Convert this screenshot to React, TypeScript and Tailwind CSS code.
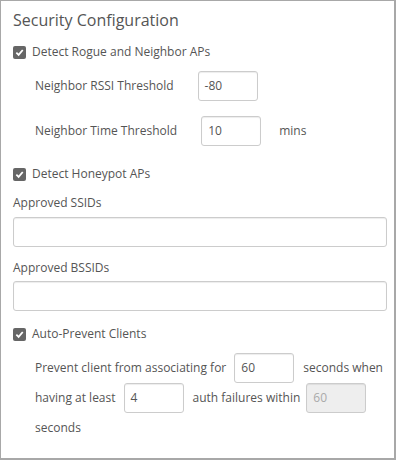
const font = { fontFamily: '"Open Sans", "Liberation Sans", sans-serif' };

function Check({ label }: { label: string }) {
  return (
    <div className="flex h-[20px] items-center gap-[6px]">
      <span className="flex h-[13px] w-[13px] items-center justify-center rounded-[2px] bg-[#666]">
        <svg width="9" height="9" viewBox="0 0 10 10">
          <path d="M1.5 5.2 L4 7.6 L8.6 2.2" fill="none" stroke="#fff" strokeWidth="2" />
        </svg>
      </span>
      <span>{label}</span>
    </div>
  );
}

function Box({ value, w = "w-[60px]", disabled = false }: { value: string; w?: string; disabled?: boolean }) {
  return (
    <div
      className={`flex h-[30px] shrink-0 items-center rounded-[3px] border border-[#ccc] px-[6px] shadow-[inset_0_1px_1px_rgba(0,0,0,0.075)] ${w} ${
        disabled ? "bg-[#eee] text-[#aaa]" : "bg-white text-[#555]"
      }`}
    >
      {value}
    </div>
  );
}

export default function App() {
  return (
    <div
      style={font}
      className="h-[460px] w-[396px] whitespace-nowrap border border-r-2 border-b-2 border-[#a8a8a8] bg-white pl-[12px] pr-[7px] pt-[7px] text-[12px] text-[#555]"
    >
      <h1 className="h-[24px] text-[16px] leading-[24px] text-[#555]">Security Configuration</h1>

      <div className="mt-[10px]">
        <Check label="Detect Rogue and Neighbor APs" />
      </div>

      <div className="mt-[9px] flex items-center gap-[24px] pl-[22px]">
        <span>Neighbor RSSI Threshold</span>
        <Box value="-80" />
      </div>
      <div className="mt-[15px] flex items-center pl-[22px]">
        <span>Neighbor Time Threshold</span>
        <div className="ml-[24px]">
          <Box value="10" />
        </div>
        <span className="ml-[18px]">mins</span>
      </div>

      <div className="mt-[18px]">
        <Check label="Detect Honeypot APs" />
      </div>

      <div className="mt-[9px] flex h-[20px] items-center">Approved SSIDs</div>
      <div className="mt-[4px]">
        <Box value="" w="w-full" />
      </div>

      <div className="mt-[11px] flex h-[20px] items-center">Approved BSSIDs</div>
      <div className="mt-[3px]">
        <Box value="" w="w-full" />
      </div>

      <div className="mt-[13px]">
        <Check label="Auto-Prevent Clients" />
      </div>

      <div className="mt-[9px] pl-[22px]">
        <div className="flex h-[30px] items-center">
          <span>Prevent client from associating for</span>
          <div className="ml-[8px] mr-[9px]">
            <Box value="60" />
          </div>
          <span>seconds when</span>
        </div>
        <div className="flex h-[30px] items-center">
          <span>having at least</span>
          <div className="ml-[8px] mr-[9px]">
            <Box value="4" />
          </div>
          <span>auth failures within</span>
          <div className="ml-[6px]">
            <Box value="60" disabled />
          </div>
        </div>
        <div className="flex h-[30px] items-center">seconds</div>
      </div>
    </div>
  );
}
